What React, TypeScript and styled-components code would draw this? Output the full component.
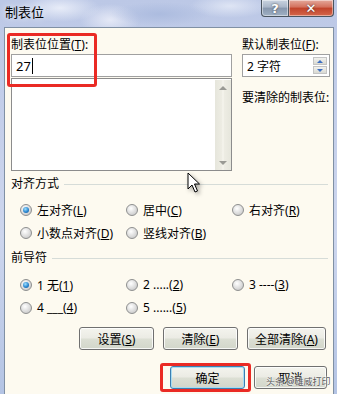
import React from "react";
import styled, { createGlobalStyle } from "styled-components";

const GlobalStyle = createGlobalStyle`
  html, body {
    margin: 0;
    padding: 0;
  }
  body {
    font-family: "Noto Sans", "Noto Sans CJK SC", sans-serif;
    font-size: 12px;
    color: #000;
  }
`;

const Window = styled.div`
  position: relative;
  width: 337px;
  height: 394px;
  overflow: hidden;
  display: flex;
  flex-direction: column;
  background:
    radial-gradient(ellipse 40px 14px at 60px 8px, rgba(236, 240, 250, 0.9), transparent),
    radial-gradient(ellipse 50px 12px at 160px 14px, rgba(170, 186, 222, 0.9), transparent),
    radial-gradient(ellipse 40px 12px at 230px 6px, rgba(226, 232, 246, 0.9), transparent),
    radial-gradient(ellipse 30px 16px at 110px 20px, rgba(238, 240, 250, 0.8), transparent),
    linear-gradient(180deg, #bcc8e6 0%, #cdd6ee 60%, #b4c4e4 100%);
`;

const TitleBar = styled.div`
  height: 27px;
  flex: none;
  display: flex;
  justify-content: space-between;
  align-items: flex-start;
`;

const Title = styled.div`
  padding: 4px 0 0 5px;
  font-size: 13px;
  line-height: 16px;
  color: #000;
  text-shadow: 0 0 6px rgba(255, 255, 255, 0.9);
`;

const Controls = styled.div`
  display: flex;
  margin-right: 3px;
`;

const CtlButton = styled.div<{ $close?: boolean }>`
  width: ${(p) => (p.$close ? 45 : 28)}px;
  height: 17px;
  box-sizing: border-box;
  display: flex;
  align-items: center;
  justify-content: center;
  border: 1px solid #4a5560;
  border-top: none;
  border-left: ${(p) => (p.$close ? "none" : "1px solid #4a5560")};
  border-radius: ${(p) => (p.$close ? "0 0 4px 0" : "0 0 0 4px")};
  background: ${(p) =>
    p.$close
      ? "linear-gradient(180deg, #e4a99c 0%, #d3705c 45%, #c0432b 50%, #d4664a 100%)"
      : "linear-gradient(180deg, #c9d3e0 0%, #a9b6c8 45%, #8797ad 50%, #9fb0c4 100%)"};
  box-shadow: inset 0 0 0 1px rgba(255, 255, 255, 0.45);
  color: #fff;
  font-family: "DejaVu Sans", sans-serif;
  font-weight: bold;
  font-size: 13px;
  text-shadow: 0 0 2px #333;
`;

const Body = styled.div`
  flex: 1;
  margin: 0 3px 0 4px;
  background: #fdfaf0;
  border: 1px solid #8090a4;
  border-bottom: none;
  padding: 9px 3px 0 6px;
  display: flex;
  flex-direction: column;
`;

const TopRow = styled.div`
  display: grid;
  grid-template-columns: 221px 88px;
  column-gap: 10px;
`;

const Column = styled.div`
  display: flex;
  flex-direction: column;
`;

const Label = styled.div<{ $gap?: number }>`
  line-height: 16px;
  white-space: nowrap;
  margin-top: ${(p) => p.$gap ?? 0}px;
`;

const TextBox = styled.div`
  margin-top: 1px;
  height: 23px;
  box-sizing: border-box;
  border: 1px solid #a0a0a0;
  background: #fff;
  display: flex;
  align-items: center;
  padding-left: 4px;
  font-size: 13px;
`;

const Caret = styled.span`
  display: inline-block;
  width: 1px;
  height: 16px;
  background: #000;
  margin-left: 1px;
`;

const ListBox = styled.div`
  margin-top: 1px;
  height: 93px;
  box-sizing: border-box;
  border: 1px solid #8c8c8c;
  background: #fff;
  display: flex;
  justify-content: flex-end;
`;

const ScrollTrack = styled.div`
  width: 16px;
  margin-top: 1px;
  background: linear-gradient(90deg, #e6e6dc 0%, #eeede4 45%, #fbfaf4 50%, #eeede4 55%, #e6e6dc 100%);
  display: flex;
  flex-direction: column;
  justify-content: space-between;
  align-items: center;
  padding: 6px 0 5px;
  box-sizing: border-box;
`;

const Arrow = styled.span<{ $down?: boolean }>`
  width: 0;
  height: 0;
  border-left: 4px solid transparent;
  border-right: 4px solid transparent;
  ${(p) =>
    p.$down ? "border-top: 4px solid #9a9a94;" : "border-bottom: 4px solid #9a9a94;"}
`;

const Spinner = styled(TextBox)`
  justify-content: space-between;
  padding-right: 2px;
  font-size: 12px;
`;

const SpinButtons = styled.div`
  display: flex;
  flex-direction: column;
  gap: 1px;
`;

const SpinButton = styled.div`
  width: 14px;
  height: 8px;
  box-sizing: border-box;
  border: 1px solid #c4c4c4;
  background: linear-gradient(#f2f2ee, #d9d9d2);
  display: flex;
  align-items: center;
  justify-content: center;
`;

const SpinArrow = styled.span<{ $down?: boolean }>`
  width: 0;
  height: 0;
  border-left: 3px solid transparent;
  border-right: 3px solid transparent;
  ${(p) =>
    p.$down ? "border-top: 3px solid #3d6fc2;" : "border-bottom: 3px solid #3d6fc2;"}
`;

const GroupHeader = styled.div<{ $gap: number }>`
  margin-top: ${(p) => p.$gap}px;
  margin-right: 2px;
  display: flex;
  align-items: center;
  gap: 5px;
  line-height: 16px;
`;

const GroupLine = styled.div`
  flex: 1;
  height: 1px;
  background: #d6dcd8;
`;

const RadioGrid = styled.div<{ $gap: number }>`
  margin-top: ${(p) => p.$gap}px;
  padding-left: 9px;
  display: grid;
  grid-template-columns: 106px 106px auto;
  grid-auto-rows: 23px;
`;

const RadioItem = styled.label`
  display: flex;
  align-items: center;
  gap: 5px;
  white-space: nowrap;
`;

const RadioDot = styled.span<{ $checked?: boolean }>`
  width: 12px;
  height: 12px;
  box-sizing: border-box;
  border-radius: 50%;
  border: 1px solid #8e8f8f;
  background: radial-gradient(circle at 40% 35%, #ffffff 0%, #e2e2e2 45%, #bfbfbf 100%);
  display: flex;
  align-items: center;
  justify-content: center;

  &::after {
    content: "";
    width: 6px;
    height: 6px;
    border-radius: 50%;
    background: ${(p) =>
      p.$checked
        ? "radial-gradient(circle at 40% 35%, #9fe0ff 0%, #2a86cf 55%, #0d4f8f 100%)"
        : "transparent"};
  }
`;

const ButtonRow = styled.div<{ $gap: number; $left: number }>`
  margin-top: ${(p) => p.$gap}px;
  padding-left: ${(p) => p.$left}px;
  display: flex;
  gap: 9px;
`;

const Button = styled.button<{ $w: number; $default?: boolean }>`
  width: ${(p) => p.$w}px;
  height: 23px;
  box-sizing: border-box;
  padding: 0;
  border: 1px solid ${(p) => (p.$default ? "#3c7fb1" : "#707070")};
  border-radius: 3px;
  background: linear-gradient(180deg, #f4f4ee 0%, #ebebe4 48%, #dcdfd4 52%, #d2d6ca 100%);
  box-shadow: inset 0 0 0 1px ${(p) => (p.$default ? "#a8dcf2" : "rgba(255,255,255,0.8)")};
  font-family: inherit;
  font-size: 12px;
  color: #000;
`;

const Highlight = styled.div<{ $x: number; $y: number; $w: number; $h: number }>`
  position: absolute;
  left: ${(p) => p.$x}px;
  top: ${(p) => p.$y}px;
  width: ${(p) => p.$w}px;
  height: ${(p) => p.$h}px;
  box-sizing: border-box;
  border: 3px solid #ea2a24;
  border-radius: 3px;
  pointer-events: none;
`;

const Watermark = styled.div`
  position: absolute;
  left: 266px;
  top: 376px;
  font-size: 9px;
  line-height: 12px;
  color: #5a5a5a;
  text-shadow: 0 0 2px #fff, 0 0 2px #fff;
  white-space: nowrap;
`;

const Cursor = styled.svg`
  position: absolute;
  left: 187px;
  top: 172px;
  filter: drop-shadow(2px 2px 2px rgba(0, 0, 0, 0.35));
`;

const alignOptions = [
  { text: "左对齐", key: "L", checked: true },
  { text: "居中", key: "C" },
  { text: "右对齐", key: "R" },
  { text: "小数点对齐", key: "D" },
  { text: "竖线对齐", key: "B" },
];

const leaderOptions = [
  { text: "1 无", key: "1", checked: true },
  { text: "2 .....", key: "2" },
  { text: "3 ----", key: "3" },
  { text: "4 ___", key: "4" },
  { text: "5 ......", key: "5" },
];

type Opt = { text: string; key: string; checked?: boolean };

function Radios({ items, gap }: { items: Opt[]; gap: number }) {
  return (
    <RadioGrid $gap={gap}>
      {items.map((item, index) => (
        <RadioItem key={index}>
          <RadioDot $checked={item.checked} />
          <span>
            {item.text}(<u>{item.key}</u>)
          </span>
        </RadioItem>
      ))}
    </RadioGrid>
  );
}

export default function App() {
  return (
    <>
      <GlobalStyle />
      <Window>
        <TitleBar>
          <Title>制表位</Title>
          <Controls>
            <CtlButton>?</CtlButton>
            <CtlButton $close>✕</CtlButton>
          </Controls>
        </TitleBar>
        <Body>
          <TopRow>
            <Column>
              <Label>
                制表位位置(<u>T</u>):
              </Label>
              <TextBox>
                27
                <Caret />
              </TextBox>
              <ListBox>
                <ScrollTrack>
                  <Arrow />
                  <Arrow $down />
                </ScrollTrack>
              </ListBox>
            </Column>
            <Column>
              <Label>
                默认制表位(<u>F</u>):
              </Label>
              <Spinner>
                <span>2 字符</span>
                <SpinButtons>
                  <SpinButton>
                    <SpinArrow />
                  </SpinButton>
                  <SpinButton>
                    <SpinArrow $down />
                  </SpinButton>
                </SpinButtons>
              </Spinner>
              <Label $gap={13}>要清除的制表位:</Label>
            </Column>
          </TopRow>

          <GroupHeader $gap={5}>
            对齐方式
            <GroupLine />
          </GroupHeader>
          <Radios items={alignOptions} gap={6} />

          <GroupHeader $gap={6}>
            前导符
            <GroupLine />
          </GroupHeader>
          <Radios items={leaderOptions} gap={7} />

          <ButtonRow $gap={8} $left={68}>
            <Button $w={75}>
              设置(<u>S</u>)
            </Button>
            <Button $w={75}>
              清除(<u>E</u>)
            </Button>
            <Button $w={79}>
              全部清除(<u>A</u>)
            </Button>
          </ButtonRow>
          <ButtonRow $gap={16} $left={159}>
            <Button $w={75} $default>
              确定
            </Button>
            <Button $w={73}>取消</Button>
          </ButtonRow>
        </Body>

        <Highlight $x={7} $y={33} $w={90} $h={54} />
        <Highlight $x={160} $y={363} $w={91} $h={29} />
        <Watermark>头条 @雄威打印</Watermark>
        <Cursor width="14" height="22" viewBox="0 0 14 22">
          <path
            d="M1 1 L1 17 L5 13 L8 20 L10.5 19 L7.5 12 L12.5 12 Z"
            fill="#fff"
            stroke="#000"
            strokeWidth="1"
            strokeLinejoin="round"
          />
        </Cursor>
      </Window>
    </>
  );
}
